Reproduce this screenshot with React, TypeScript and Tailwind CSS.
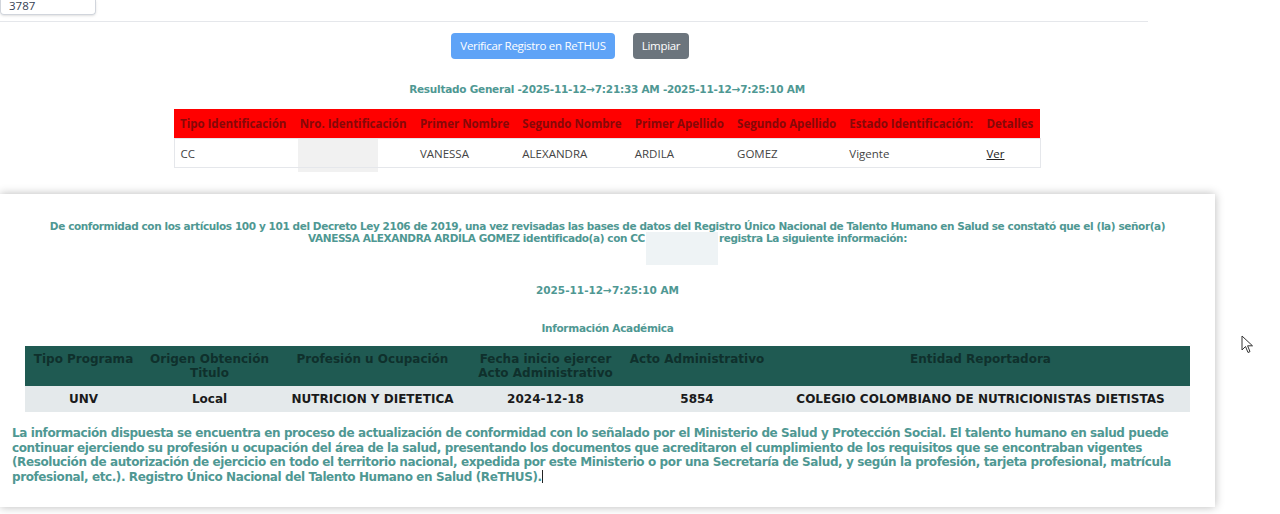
const teal = "text-[#4f9893]";

const personCols = [
  "Tipo Identificación",
  "Nro. Identificación",
  "Primer Nombre",
  "Segundo Nombre",
  "Primer Apellido",
  "Segundo Apellido",
  "Estado Identificación:",
  "Detalles",
];

const academicCols = [
  { label: "Tipo Programa", w: "w-[117px]" },
  { label: "Origen Obtención Titulo", w: "w-[135px]" },
  { label: "Profesión u Ocupación", w: "w-[191px]" },
  { label: "Fecha inicio ejercer Acto Administrativo", w: "w-[155px]" },
  { label: "Acto Administrativo", w: "w-[148px]" },
  { label: "Entidad Reportadora", w: "" },
];

const academicRow = ["UNV", "Local", "NUTRICION Y DIETETICA", "2024-12-18", "5854", "COLEGIO COLOMBIANO DE NUTRICIONISTAS DIETISTAS"];

function Cursor() {
  return (
    <svg className="absolute left-[1241px] top-[335px]" width="14" height="20" viewBox="0 0 14 20">
      <path d="M1 1 L1 15 L4.5 11.5 L7 17.5 L9 16.6 L6.6 10.8 L11.5 10.8 Z" fill="#fff" stroke="#333" strokeWidth="1" strokeLinejoin="round" />
    </svg>
  );
}

export default function App() {
  return (
    <div className="relative w-[1280px] h-[514px] bg-white overflow-hidden">
      {/* search input (scrolled) */}
      <div className="w-[96px] h-[15px] border border-t-0 border-gray-300 rounded-b shadow-sm">
        <div className="pl-2 text-[11.5px] leading-[11px] text-gray-700 font-['Open_Sans',sans-serif]">3787</div>
      </div>
      <div className="mt-[6px] w-[1148px] border-t border-gray-200" />

      {/* buttons */}
      <div className="flex gap-[18px] ml-[451px] mt-[11px] font-['Open_Sans',sans-serif] text-[11.5px] tracking-[-0.3px] text-white">
        <button className="h-[26px] w-[164px] rounded bg-[#5ea3f7]">Verificar Registro en ReTHUS</button>
        <button className="h-[26px] w-[56px] rounded bg-[#6c757d]">Limpiar</button>
      </div>

      <div className="w-[1214px]">
        <p className={`mt-[23px] text-center font-bold text-[10.5px] tracking-[-0.25px] ${teal} font-['DejaVu_Sans',sans-serif]`}>
          Resultado General -2025-11-12→7:21:33 AM -2025-11-12→7:25:10 AM
        </p>

        {/* person table */}
        <table className="mt-[11px] mx-auto w-[867px] border-collapse font-['Open_Sans',sans-serif] text-[11.5px]">
          <thead>
            <tr className="bg-[#ff0000] h-[30px]">
              {personCols.map((c) => (
                <th key={c} className="text-left font-bold text-[#860808] px-[6px] whitespace-nowrap">
                  {c}
                </th>
              ))}
            </tr>
          </thead>
          <tbody>
            <tr className="h-[28px] border border-gray-200 text-[#444]">
              <td className="px-[6px]">CC</td>
              <td className="px-[6px]">
                <div className="w-[80px] h-[33px] -mb-[5px] bg-[#f1f1f1] ml-[-2px]" />
              </td>
              <td className="px-[6px]">VANESSA</td>
              <td className="px-[6px]">ALEXANDRA</td>
              <td className="px-[6px]">ARDILA</td>
              <td className="px-[6px]">GOMEZ</td>
              <td className="px-[6px]">Vigente</td>
              <td className="px-[6px]">
                <span className="underline text-[#222]">Ver</span>
              </td>
            </tr>
          </tbody>
        </table>
      </div>

      {/* certificate panel */}
      <div className={`mt-[26px] w-[1215px] h-[313px] bg-white shadow-[0_0_9px_rgba(0,0,0,0.28)] font-['DejaVu_Sans',sans-serif] font-bold ${teal}`}>
        <div className="pt-[26px] text-center text-[10.5px] leading-[12px] tracking-[-0.4px]">
          <p className="leading-[12px]">
            De conformidad con los artículos 100 y 101 del Decreto Ley 2106 de 2019, una vez revisadas las bases de datos del Registro Único Nacional de Talento Humano en Salud se constató que el (la) señor(a)
          </p>
          <p className="flex justify-center items-start leading-[12px] h-[12px]">
            <span>VANESSA ALEXANDRA ARDILA GOMEZ identificado(a) con CC</span>
            <span className="inline-block w-[72px] h-[33px] bg-[#eef3f5] mx-[1px]" />
            <span>registra La siguiente información:</span>
          </p>
        </div>
        <p className="mt-[40px] text-center text-[10.5px] leading-[12px]">2025-11-12→7:25:10 AM</p>
        <p className="mt-[26px] text-center text-[10.5px] leading-[12px] tracking-[-0.3px]">Información Académica</p>

        <div className="mx-[25px] mt-[12px]">
          <table className="w-full border-collapse text-[12px]">
            <thead>
              <tr className="bg-[#1f5a52] h-[40px]">
                {academicCols.map((c) => (
                  <th key={c.label} className={`${c.w} align-top pt-[6px] leading-[14px] font-bold text-[#0f302c]`}>
                    {c.label}
                  </th>
                ))}
              </tr>
            </thead>
            <tbody>
              <tr className="bg-[#e4e9eb] h-[26px]">
                {academicRow.map((v) => (
                  <td key={v} className="text-center text-[#1a1a1a] font-bold">
                    {v}
                  </td>
                ))}
              </tr>
            </tbody>
          </table>
        </div>

        <p className="mt-[14px] px-[12px] text-[12px] leading-[14.5px] tracking-[-0.4px]">
          La información dispuesta se encuentra en proceso de actualización de conformidad con lo señalado por el Ministerio de Salud y Protección Social. El talento humano en salud puede continuar ejerciendo su profesión u ocupación del área de la salud, presentando los documentos que acreditaron el cumplimiento de los requisitos que se encontraban vigentes (Resolución de autorización de ejercicio en todo el territorio nacional, expedida por este Ministerio o por una Secretaría de Salud, y según la profesión, tarjeta profesional, matrícula profesional, etc.). Registro Único Nacional del Talento Humano en Salud (ReTHUS).
          <span className="inline-block w-px h-[13px] bg-[#222] align-[-2px]" />
        </p>
      </div>

      <Cursor />
    </div>
  );
}
